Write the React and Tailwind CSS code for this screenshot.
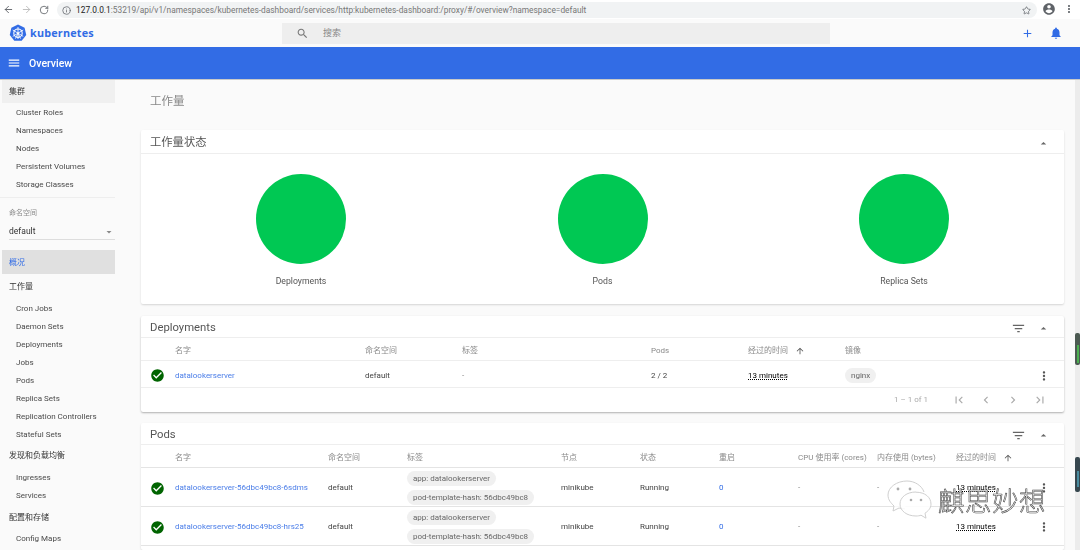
import React from 'react';
import { ArrowLeft, ArrowRight, RotateCw, Info, Star } from 'lucide-react';

const FONT = "font-['Roboto','Noto_Sans_CJK_SC',sans-serif]";

// Material icon paths used all over the dashboard
const PATHS = {
  menu: 'M3 18h18v-2H3v2zm0-5h18v-2H3v2zm0-7v2h18V6H3z',
  search: 'M15.5 14h-.79l-.28-.27C15.41 12.59 16 11.11 16 9.5 16 5.91 13.09 3 9.5 3S3 5.91 3 9.5 5.91 16 9.5 16c1.61 0 3.09-.59 4.23-1.57l.27.28v.79l5 4.99L20.49 19l-4.99-5zm-6 0C7.01 14 5 11.99 5 9.5S7.01 5 9.5 5 14 7.01 14 9.5 11.99 14 9.5 14z',
  plus: 'M19 13h-6v6h-2v-6H5v-2h6V5h2v6h6v2z',
  bell: 'M12 22c1.1 0 2-.9 2-2h-4c0 1.1.89 2 2 2zm6-6v-5c0-3.07-1.64-5.64-4.5-6.32V4c0-.83-.67-1.5-1.5-1.5s-1.5.67-1.5 1.5v.68C7.63 5.36 6 7.92 6 11v5l-2 2v1h16v-1l-2-2z',
  account: 'M12 2C6.48 2 2 6.48 2 12s4.48 10 10 10 10-4.48 10-10S17.52 2 12 2zm0 3c1.66 0 3 1.34 3 3s-1.34 3-3 3-3-1.34-3-3 1.34-3 3-3zm0 14.2c-2.5 0-4.71-1.28-6-3.22.03-1.99 4-3.08 6-3.08 1.99 0 5.97 1.09 6 3.08-1.29 1.94-3.5 3.22-6 3.22z',
  more: 'M12 8c1.1 0 2-.9 2-2s-.9-2-2-2-2 .9-2 2 .9 2 2 2zm0 2c-1.1 0-2 .9-2 2s.9 2 2 2 2-.9 2-2-.9-2-2-2zm0 6c-1.1 0-2 .9-2 2s.9 2 2 2 2-.9 2-2-.9-2-2-2z',
  filter: 'M10 18h4v-2h-4v2zM3 6v2h18V6H3zm3 7h12v-2H6v2z',
  up: 'M7 14l5-5 5 5z',
  down: 'M7 10l5 5 5-5z',
  arrowUp: 'M4 12l1.41 1.41L11 7.83V20h2V7.83l5.58 5.59L20 12l-8-8-8 8z',
  check: 'M12 2C6.48 2 2 6.48 2 12s4.48 10 10 10 10-4.48 10-10S17.52 2 12 2zm-2 15l-5-5 1.41-1.41L10 14.17l7.59-7.59L19 8l-9 9z',
  first: 'M18.41 16.59L13.82 12l4.59-4.59L17 6l-6 6 6 6zM6 6h2v12H6z',
  prev: 'M15.41 7.41L14 6l-6 6 6 6 1.41-1.41L10.83 12z',
  next: 'M10 6L8.59 7.41 13.17 12l-4.58 4.59L10 18l6-6z',
  last: 'M5.59 7.41L10.18 12l-4.59 4.59L7 18l6-6-6-6zM16 6h2v12h-2z',
};

const Icon = ({ name, className }) => (
  <svg viewBox="0 0 24 24" fill="currentColor" className={className}>
    <path d={PATHS[name]} />
  </svg>
);

const KubeLogo = () => (
  <svg viewBox="0 0 24 24" className="w-[18px] h-[18px]">
    <path d="M12 .8l8.8 4.2 2.2 9.5-6.1 7.7H7.1L1 14.5 3.2 5z" fill="#326ce5" />
    <circle cx="12" cy="12.2" r="5.6" fill="none" stroke="#fff" strokeWidth="1.5" />
    <path d="M12 4v16M5 8l14 8.5M19 8L5 16.5M8.5 19.5l3.5-7.3 3.5 7.3" stroke="#fff" strokeWidth="1.1" fill="none" />
    <circle cx="12" cy="12.2" r="1.3" fill="#fff" />
  </svg>
);

const NavGroup = ({ label, active, selected }) => (
  <div className={`flex items-center pl-[7px] pt-[1px] ml-[2px] text-[8px] ${selected ? 'h-[24px] bg-[#e0e0e0] text-[#326ce5]' : active ? 'h-[23px] bg-[#f0f0f0] text-[#333]' : 'h-[23px] text-[#333]'}`}>
    {label}
  </div>
);

const NavItem = ({ label }) => (
  <div className="h-[18px] flex items-center pl-[16px] pt-[1.5px] text-[8px] text-[#4a4a4a]">{label}</div>
);

const Sidebar = () => (
  <aside className="w-[115px] shrink-0 flex flex-col">
    <NavGroup label="集群" active />
    {['Cluster Roles', 'Namespaces', 'Nodes', 'Persistent Volumes', 'Storage Classes'].map((n) => (
      <NavItem key={n} label={n} />
    ))}
    <div className="h-px bg-[#eeeeee] mt-[4px]" />
    <div className="pl-[9px] mt-[10px] text-[7px] leading-[10px] text-[#8a8a8a]">命名空间</div>
    <div className="ml-[9px] mt-[4px] h-[18px] pt-[2px] flex items-center justify-between border-b border-[#dddddd] text-[8.5px] text-[#333]">
      default
      <Icon name="down" className="w-[12px] h-[12px] text-[#888]" />
    </div>
    <div className="mt-[10px]"><NavGroup label="概况" selected /></div>
    <div className="mt-[0.5px] mb-[1.5px]"><NavGroup label="工作量" /></div>
    {['Cron Jobs', 'Daemon Sets', 'Deployments', 'Jobs', 'Pods', 'Replica Sets', 'Replication Controllers', 'Stateful Sets'].map((n) => (
      <NavItem key={n} label={n} />
    ))}
    <div className="mt-[0.5px] mb-[1.5px]"><NavGroup label="发现和负载均衡" /></div>
    <NavItem label="Ingresses" />
    <NavItem label="Services" />
    <div className="mt-[1.5px] mb-[0.5px]"><NavGroup label="配置和存储" /></div>
    <NavItem label="Config Maps" />
  </aside>
);

const CardHeader = ({ title, filter, small }) => (
  <div className={`${small ? 'h-[22px]' : 'h-[24px]'} flex items-center justify-between pl-[9px] pr-[14px] pt-[3px] border-b border-[#eeeeee]`}>
    <span className="text-[11.3px] text-[#555]">{title}</span>
    <div className="flex items-center gap-[11px] text-[#666]">
      {filter && <Icon name="filter" className="w-[15px] h-[15px]" />}
      <Icon name="up" className="w-[13px] h-[13px]" />
    </div>
  </div>
);

const Circle = ({ label }) => (
  <div className="flex flex-col items-center w-[200px]">
    <div className="w-[90px] h-[90px] rounded-full bg-[#00c853]" />
    <div className="mt-[11px] text-[8.7px] leading-[12px] text-[#555]">{label}</div>
  </div>
);

const Th = ({ children, sort }) => (
  <div className="flex items-center gap-[7px] text-[8px] text-[#8a8a8a]">
    {children}
    {sort && <Icon name="arrowUp" className="w-[10px] h-[10px] text-[#555]" />}
  </div>
);

const Chip = ({ children }) => (
  <span className="inline-flex items-center h-[15px] px-[6px] rounded-full bg-[#f0f0f0] text-[8px] text-[#666] whitespace-nowrap">{children}</span>
);

const Cell = ({ children, className = 'text-[#444]' }) => (
  <div className={`text-[8px] whitespace-nowrap ${className}`}>{children}</div>
);

const StatusDot = () => (
  <div className="flex justify-center pr-[2px]">
    <Icon name="check" className="w-[15px] h-[15px] text-[#006400]" />
  </div>
);

const RowMenu = () => (
  <div className="flex justify-center">
    <Icon name="more" className="w-[14px] h-[14px] text-[#555]" />
  </div>
);

const DEPLOY_COLS = 'grid grid-cols-[34px_190px_97px_189px_97px_97px_189px_20px] items-center';
const POD_COLS = 'grid grid-cols-[34px_153px_79px_154px_79px_79px_79px_79px_79px_78px_20px] items-center';

const PodRow = ({ name }) => (
  <div className={`${POD_COLS} h-[39px] pt-[2px] border-b border-[#e4e4e4]`}>
    <StatusDot />
    <Cell className="text-[#4a7de8]">{name}</Cell>
    <Cell>default</Cell>
    <div className="flex flex-col items-start gap-[4px]">
      <Chip>app: datalookerserver</Chip>
      <Chip>pod-template-hash: 56dbc49bc8</Chip>
    </div>
    <Cell>minikube</Cell>
    <Cell>Running</Cell>
    <Cell className="text-[#326ce5]">0</Cell>
    <Cell className="text-[#888]">-</Cell>
    <Cell className="text-[#888]">-</Cell>
    <Cell className="underline decoration-dotted">13 minutes</Cell>
    <RowMenu />
  </div>
);

const Watermark = () => (
  <div className="absolute left-[886px] top-[480px] flex items-center gap-[6px] pointer-events-none">
    <svg viewBox="0 0 46 40" className="w-[46px] h-[40px]" fill="none" stroke="#cfcfcf" strokeWidth="1">
      <path d="M21 1C11 1 2 7 2 15c0 5 3 8 6 11l-1 5 6-3c2 .6 4 .8 6 .8" fill="#ffffff" fillOpacity="0.75" />
      <path d="M21 1c8 0 15 5 17 11" />
      <path d="M30 12c-9 0-16 5-16 12s7 12 16 12c2 0 4-.3 5-.8l5 3-1-5c3-2 6-5 6-9 0-7-6-12-15-12z" fill="#ffffff" fillOpacity="0.85" />
      <circle cx="12" cy="9" r="1.4" fill="#aaa" stroke="none" />
      <circle cx="24" cy="9" r="1.4" fill="#aaa" stroke="none" />
      <circle cx="25" cy="20" r="1.3" fill="#aaa" stroke="none" />
      <circle cx="35" cy="20" r="1.3" fill="#aaa" stroke="none" />
    </svg>
    <span className="text-[26.5px] leading-[30px] font-light tracking-[0.5px] text-white [-webkit-text-stroke:0.6px_#444] font-['Noto_Sans_CJK_SC',sans-serif]">麒思妙想</span>
  </div>
);

export default function App() {
  return (
    <div className={`relative w-[1080px] h-[550px] overflow-hidden bg-[#fafafa] ${FONT}`}>
      <div className="blur-[0.5px] h-full flex flex-col">
        {/* browser chrome */}
        <div className="h-[19px] shrink-0 bg-white flex items-center pl-[3px]">
          <div className="flex items-center gap-[7px] text-[#5f6368]">
            <ArrowLeft className="w-[11px] h-[11px]" />
            <ArrowRight className="w-[11px] h-[11px] text-[#bbbbbb]" />
            <RotateCw className="w-[10px] h-[10px]" />
          </div>
        </div>
        <div className="absolute left-[57px] top-[2px] w-[980px] h-[16px] rounded-full bg-[#f1f3f4] flex items-center justify-between pl-[5px] pr-[6px]">
          <div className="flex items-center gap-[5px] pt-[1px]">
            <Info className="w-[9px] h-[9px] text-[#5f6368]" />
            <span className="text-[8.35px] text-[#777]"><span className="text-[#222]">127.0.0.1</span>:53219/api/v1/namespaces/kubernetes-dashboard/services/http:kubernetes-dashboard:/proxy/#/overview?namespace=default</span>
          </div>
          <Star className="w-[9px] h-[9px] text-[#5f6368]" />
        </div>
        <div className="absolute left-[1042px] top-[2px] flex items-center gap-[7px] text-[#5f6368]">
          <Icon name="account" className="w-[14px] h-[14px]" />
          <Icon name="more" className="w-[12px] h-[12px]" />
        </div>

        {/* toolbar */}
        <div className="h-[28px] shrink-0 bg-[#fafafa] flex items-center pl-[9px] pr-[17px]">
          <KubeLogo />
          <span className="ml-[3px] w-[252px] pt-[1px] text-[10.8px] font-bold tracking-[0.2px] text-[#326ce5] font-['Open_Sans',sans-serif]">kubernetes</span>
          <div className="w-[548px] h-[21px] bg-[#eeeeee] flex items-center pl-[14px] text-[#777]">
            <Icon name="search" className="w-[13px] h-[13px]" />
            <span className="ml-[14px] pt-[1px] text-[9px] text-[#888]">搜索</span>
          </div>
          <div className="ml-auto flex items-center gap-[15px] text-[#326ce5]">
            <Icon name="plus" className="w-[13px] h-[13px]" />
            <Icon name="bell" className="w-[14px] h-[14px]" />
          </div>
        </div>

        {/* blue bar */}
        <div className="h-[33px] shrink-0 bg-[#326ce5] border-b border-[#c9c9c9] flex items-center pl-[7px] text-white">
          <Icon name="menu" className="w-[14px] h-[14px]" />
          <span className="ml-[8px] pt-[1px] text-[10.5px] font-medium">Overview</span>
        </div>

        <div className="flex flex-1 min-h-0">
          <Sidebar />
          <main className="flex-1 min-w-0 pl-[26px] pr-[16px] flex flex-col">
            <div className="h-[50px] shrink-0 pl-[9px] pt-[14px] text-[11.5px] leading-[14px] text-[#888]">工作量</div>

            <section className="h-[174px] shrink-0 bg-white shadow-[0_1px_2px_rgba(0,0,0,0.15)] rounded-[2px]">
              <CardHeader title="工作量状态" />
              <div className="flex justify-between pl-[60px] pr-[60px] pt-[20px]">
                <Circle label="Deployments" />
                <Circle label="Pods" />
                <Circle label="Replica Sets" />
              </div>
            </section>

            <section className="mt-[12px] h-[96px] shrink-0 bg-white shadow-[0_1px_2px_rgba(0,0,0,0.3)] rounded-[2px]">
              <CardHeader title="Deployments" filter small />
              <div className={`${DEPLOY_COLS} h-[23px] pt-[3px] border-b border-[#eeeeee]`}>
                <div />
                <Th>名字</Th>
                <Th>命名空间</Th>
                <Th>标签</Th>
                <Th>Pods</Th>
                <Th sort>经过的时间</Th>
                <Th>镜像</Th>
                <div />
              </div>
              <div className={`${DEPLOY_COLS} h-[27px] pt-[3px] border-b border-[#eeeeee]`}>
                <StatusDot />
                <Cell className="text-[#4a7de8]">datalookerserver</Cell>
                <Cell>default</Cell>
                <Cell className="text-[#888]">-</Cell>
                <Cell>2 / 2</Cell>
                <Cell className="underline decoration-dotted">13 minutes</Cell>
                <div className="flex"><Chip>nginx</Chip></div>
                <RowMenu />
              </div>
              <div className="h-[24px] flex items-center justify-end pr-[17px] text-[#aaaaaa]">
                <span className="text-[8px] mr-[24px]">1 – 1 of 1</span>
                <div className="flex items-center gap-[13px]">
                  <Icon name="first" className="w-[14px] h-[14px]" />
                  <Icon name="prev" className="w-[14px] h-[14px]" />
                  <Icon name="next" className="w-[14px] h-[14px]" />
                  <Icon name="last" className="w-[14px] h-[14px]" />
                </div>
              </div>
            </section>

            <section className="mt-[11px] flex-1 bg-white rounded-[2px] shadow-[0_1px_2px_rgba(0,0,0,0.15)]">
              <CardHeader title="Pods" filter small />
              <div className={`${POD_COLS} h-[23px] pt-[3px] border-b border-[#e4e4e4]`}>
                <div />
                <Th>名字</Th>
                <Th>命名空间</Th>
                <Th>标签</Th>
                <Th>节点</Th>
                <Th>状态</Th>
                <Th>重启</Th>
                <Th>CPU 使用率 (cores)</Th>
                <Th>内存使用 (bytes)</Th>
                <Th sort>经过的时间</Th>
                <div />
              </div>
              <PodRow name="datalookerserver-56dbc49bc8-6sdms" />
              <PodRow name="datalookerserver-56dbc49bc8-hrs25" />
            </section>
          </main>
        </div>
      </div>

      {/* scrollbar strip from the screen capture */}
      <div className="absolute right-0 top-[80px] bottom-0 w-[5px] bg-[#ececec]">
        <div className="absolute left-0 right-0 top-[253px] h-[32px] rounded-[2px] bg-[#4c5a52] flex justify-center pt-[12px]">
          <div className="w-[2px] h-[18px] bg-[#4caf50]" />
        </div>
        <div className="absolute left-0 right-0 top-[377px] h-[35px] rounded-[2px] bg-[#37474f] flex justify-center pt-[14px]">
          <div className="w-[2px] h-[16px] bg-[#4a8ca0]" />
        </div>
      </div>

      <Watermark />
    </div>
  );
}
